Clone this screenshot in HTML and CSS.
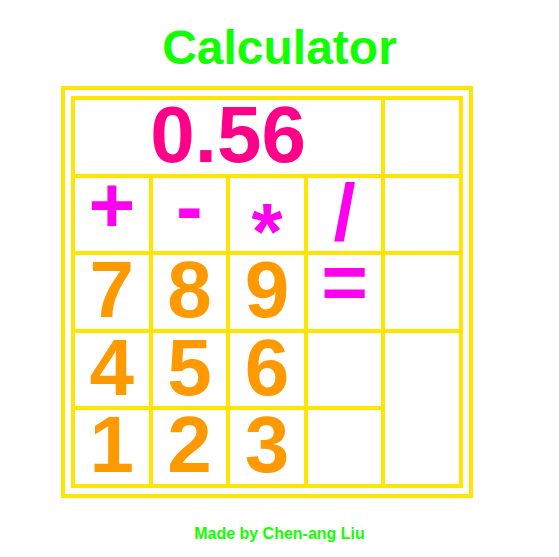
FILE: index.html
```html
<!DOCTYPE html>
<html>
<head>
<meta charset="utf-8">
<title>Calculator</title>
<link rel="stylesheet" href="styles.css">
</head>
<body>
<h1 class="title">Calculator</h1>
<div class="frame">
  <div class="grid">
    <div class="cell display span4">0.56</div>
    <div class="cell"></div>
    <div class="cell op"><span class="plus">+</span></div>
    <div class="cell op"><span class="minus">-</span></div>
    <div class="cell op"><span class="star">*</span></div>
    <div class="cell op"><span class="slash">/</span></div>
    <div class="cell"></div>
    <div class="cell num">7</div>
    <div class="cell num">8</div>
    <div class="cell num">9</div>
    <div class="cell op"><span class="equals">=</span></div>
    <div class="cell"></div>
    <div class="cell num">4</div>
    <div class="cell num">5</div>
    <div class="cell num">6</div>
    <div class="cell"></div>
    <div class="cell tall"></div>
    <div class="cell num">1</div>
    <div class="cell num">2</div>
    <div class="cell num">3</div>
    <div class="cell"></div>
  </div>
</div>
<p class="footer">Made by Chen-ang Liu</p>
</body>
</html>
```
FILE: styles.css
```css
html, body {
  margin: 0;
  padding: 0;
  background: #ffffff;
}
body {
  font-family: "Liberation Sans", Arial, sans-serif;
  font-weight: bold;
}
.title {
  margin: 20px 0 0 0;
  font-size: 48px;
  line-height: 56px;
  text-align: center;
  color: #11ff00;
  font-weight: bold;
}
.frame {
  box-sizing: border-box;
  width: 412px;
  height: 412px;
  margin: 10px 0 0 61px;
  border: 4px solid #ffe600;
  padding: 6px;
}
.grid {
  box-sizing: border-box;
  width: 392px;
  height: 392px;
  background: #ffe600;
  padding: 4px;
  display: grid;
  grid-template-columns: repeat(5, 1fr);
  grid-template-rows: repeat(5, 1fr);
  gap: 4px;
}
.cell {
  background: #ffffff;
  font-size: 80px;
  line-height: 70px;
  text-align: center;
}
.span4 {
  grid-column: span 4;
}
.tall {
  grid-row: span 2;
}
.display {
  color: #ff0088;
}
.num {
  color: #ff9900;
}
.op {
  color: #ff00ee;
}
.op span {
  display: inline-block;
}
.plus { transform: translateY(-8px); }
.minus { transform: translateY(-6px); }
.star { transform: translateY(19px); }
.equals { transform: translateY(-8px); }
.footer {
  margin: 26px 0 0 0;
  font-size: 16px;
  line-height: 20px;
  text-align: center;
  color: #11ff00;
}
```
